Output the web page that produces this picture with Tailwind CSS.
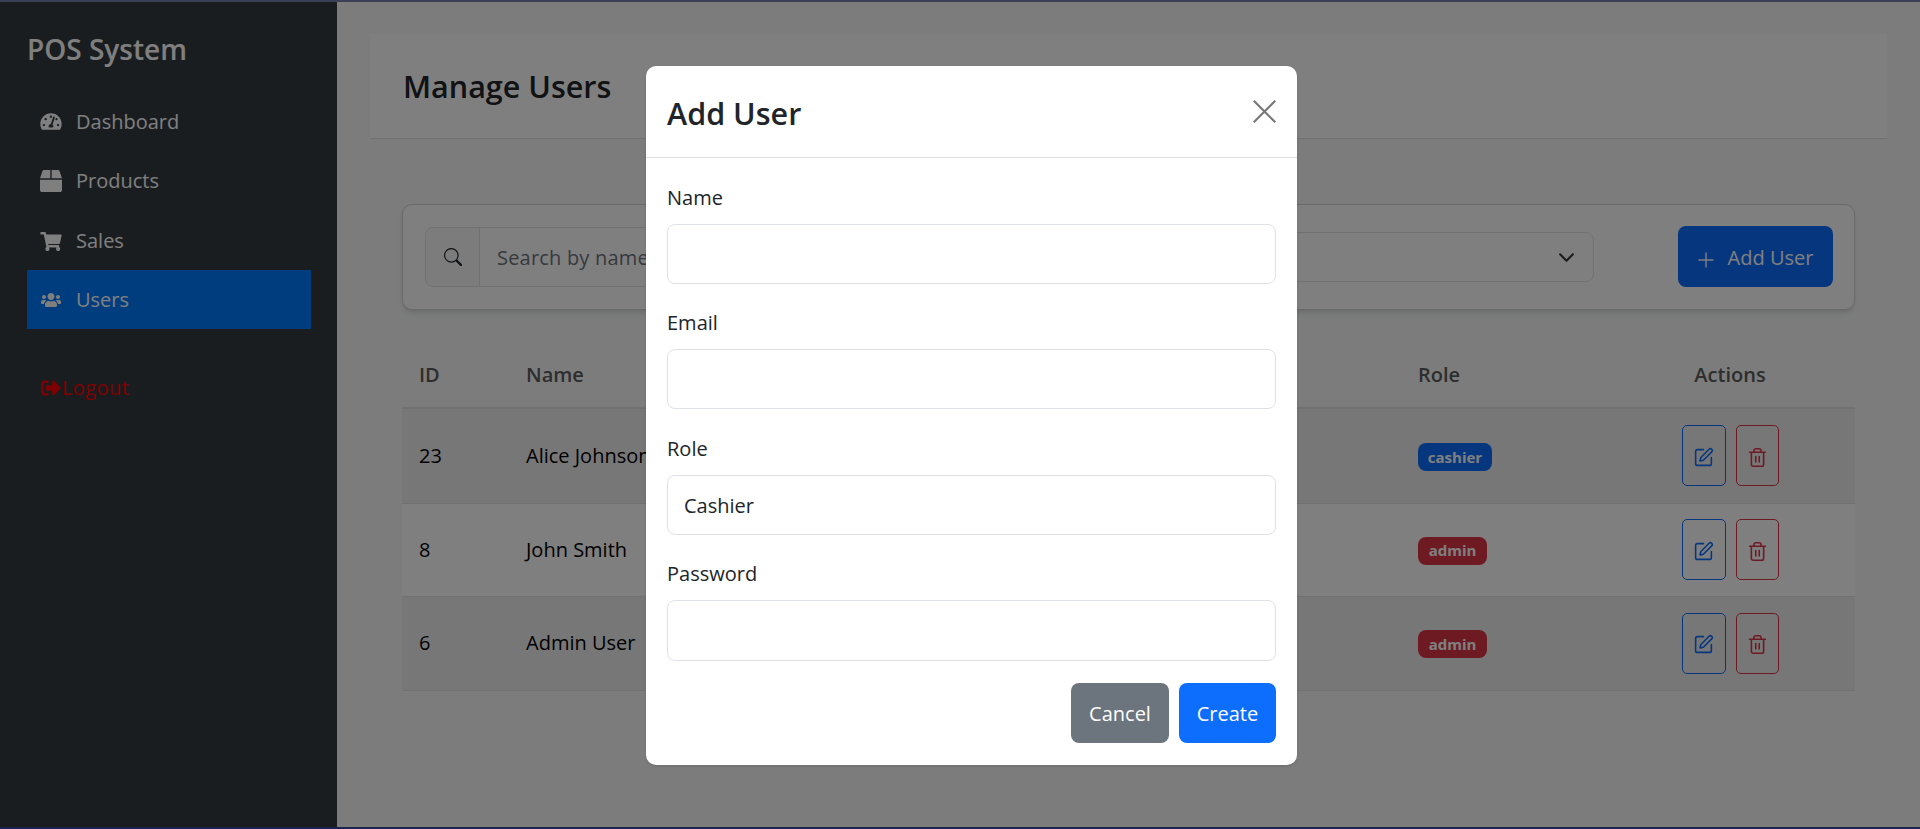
<!DOCTYPE html>
<html lang="en">
<head>
  <meta charset="UTF-8" />
  <meta name="viewport" content="width=device-width, initial-scale=1.0" />
  <title>POS System - Users</title>
  <script src="https://cdn.jsdelivr.net/npm/@tailwindcss/browser@4"></script>
</head>
<body class="h-[829px] overflow-hidden bg-white font-['Open_Sans',sans-serif] text-[20px] text-[#212529]">
  <div class="h-[2px] bg-[#3c4056]"></div>

  <div class="relative flex h-[825px]">
    <!-- Sidebar -->
    <aside class="w-[337px] shrink-0 bg-[#343a40] pt-[29px] pr-[26px] pl-[27px] text-white">
      <h1 class="mb-[25px] h-[36px] text-[28px] leading-[36px] font-semibold">POS System</h1>
      <nav class="flex flex-col">
        <a class="flex h-[59px] items-center pl-[13px]">
          <svg class="mr-[14px] h-[19px] w-[22px] fill-current" viewBox="0 0 576 512"><path d="M288 32C128.94 32 0 160.94 0 320c0 52.8 14.25 102.26 39.06 144.8 5.61 9.62 16.3 15.2 27.44 15.2h443c11.14 0 21.83-5.58 27.44-15.2C561.75 422.26 576 372.8 576 320c0-159.06-128.94-288-288-288zm0 64c14.71 0 26.58 10.13 30.32 23.65-1.11 2.26-2.64 4.23-3.45 6.67l-9.22 27.67c-5.13 3.49-10.97 6.01-17.64 6.01-17.67 0-32-14.33-32-32S270.33 96 288 96zM96 384c-17.67 0-32-14.33-32-32s14.33-32 32-32 32 14.33 32 32-14.33 32-32 32zm48-160c-17.67 0-32-14.33-32-32s14.33-32 32-32 32 14.33 32 32-14.33 32-32 32zm246.77-72.41l-61.33 184C343.13 347.33 352 364.54 352 384c0 11.72-3.38 22.55-8.88 32H232.88c-5.5-9.45-8.88-20.28-8.88-32 0-33.94 26.5-61.43 59.9-63.59l61.34-184.01c4.17-12.56 17.73-19.45 30.36-15.17 12.57 4.19 19.35 17.79 15.17 30.36zm14.66 57.2l15.52-46.55c3.47-1.29 7.13-2.23 11.05-2.23 17.67 0 32 14.33 32 32s-14.33 32-32 32c-11.38-.01-20.89-6.28-26.57-15.22zM480 384c-17.67 0-32-14.33-32-32s14.33-32 32-32 32 14.33 32 32-14.33 32-32 32z"/></svg>
          Dashboard
        </a>
        <a class="flex h-[59px] items-center pl-[13px]">
          <svg class="mr-[14px] h-[22px] w-[22px] fill-current" viewBox="0 0 512 512"><path d="M509.5 184.6L458.9 32.8C452.4 13.2 434.1 0 413.4 0H272v192h238.7c-.4-2.5-.4-5-1.2-7.4zM240 0H98.6c-20.7 0-39 13.2-45.5 32.8L2.5 184.6c-.8 2.4-.8 4.9-1.2 7.4H240V0zM0 224v240c0 26.5 21.500 48 48 48h416c26.5 0 48-21.5 48-48V224H0z"/></svg>
          Products
        </a>
        <a class="flex h-[60px] items-center pt-[2px] pl-[13px]">
          <svg class="mr-[14px] h-[19px] w-[22px] fill-current" viewBox="0 0 576 512"><path d="M528.12 301.319l47.273-208C578.806 78.301 567.391 64 551.99 64H159.208l-9.166-44.81C147.758 8.021 137.93 0 126.529 0H24C10.745 0 0 10.745 0 24v16c0 13.255 10.745 24 24 24h69.883l70.248 343.435C147.325 417.1 136 435.222 136 456c0 30.928 25.072 56 56 56s56-25.072 56-56c0-15.674-6.447-29.835-16.824-40h209.647C430.447 426.165 424 440.326 424 456c0 30.928 25.072 56 56 56s56-25.072 56-56c0-22.172-12.888-41.332-31.579-50.405l5.517-24.276c3.413-15.018-8.002-29.319-23.403-29.319H218.117l-6.545-32h293.145c11.206 0 20.92-7.754 23.403-18.681z"/></svg>
          Sales
        </a>
        <a class="flex h-[59px] items-center bg-[#007bff] pl-[13px]">
          <svg class="mr-[14px] h-[16px] w-[22px] fill-current" viewBox="0 0 640 512"><path d="M96 224c35.3 0 64-28.7 64-64s-28.7-64-64-64-64 28.7-64 64 28.7 64 64 64zm448 0c35.3 0 64-28.7 64-64s-28.7-64-64-64-64 28.7-64 64 28.7 64 64 64zm32 32h-64c-17.6 0-33.5 7.1-45.1 18.6 40.3 22.1 68.9 62 75.1 109.4h66c17.7 0 32-14.3 32-32v-32c0-35.3-28.7-64-64-64zm-256 0c61.9 0 112-50.1 112-112S381.9 32 320 32 208 82.1 208 144s50.1 112 112 112zm76.8 32h-8.3c-20.8 10-43.9 16-68.5 16s-47.6-6-68.5-16h-8.3C179.6 288 128 339.6 128 403.2V432c0 26.5 21.5 48 48 48h288c26.5 0 48-21.5 48-48v-28.8c0-63.6-51.6-115.2-115.2-115.2zm-223.7-13.4C161.5 263.1 145.6 256 128 256H64c-35.3 0-64 28.7-64 64v32c0 17.7 14.3 32 32 32h65.9c6.3-47.4 34.9-87.3 75.2-109.4z"/></svg>
          Users
        </a>
        <a class="mt-[29px] flex h-[59px] items-center pl-[13px] tracking-[0.4px] text-[#ff0000]">
          <svg class="h-[20px] w-[22px] fill-current" viewBox="0 0 512 512"><path d="M497 273L329 441c-15 15-41 4.5-41-17v-96H152c-13.3 0-24-10.7-24-24v-96c0-13.3 10.7-24 24-24h136V88c0-21.4 25.9-32 41-17l168 168c9.3 9.4 9.3 24.6 0 34zM192 436v-40c0-6.6-5.4-12-12-12H96c-17.7 0-32-14.3-32-32V160c0-17.7 14.3-32 32-32h84c6.6 0 12-5.4 12-12V76c0-6.6-5.4-12-12-12H96c-53 0-96 43-96 96v192c0 53 43 96 96 96h84c6.6 0 12-5.4 12-12z"/></svg>
          Logout
        </a>
      </nav>
    </aside>

    <!-- Main -->
    <main class="flex-1 bg-[#f8f9fa] px-[33px] pt-[32px]">
      <header class="flex h-[105px] items-center border-b border-[#dee2e6] bg-white px-[33px]">
        <h2 class="pt-[2px] text-[30.5px] font-semibold">Manage Users</h2>
      </header>

      <div class="mx-[32px] mt-[65px]">
        <!-- Filters -->
        <div class="flex h-[106px] items-center rounded-[10px] border border-[#d5d5d5] bg-white pr-[21px] pl-[22px] shadow-md">
          <div class="flex h-[60px] w-[575px] rounded-[8px] border border-[#dee2e6]">
            <span class="flex w-[54px] items-center justify-center rounded-l-[8px] border-r border-[#dee2e6] bg-[#f8f9fa]">
              <svg class="h-[18px] w-[18px] fill-current text-[#212529]" viewBox="0 0 16 16"><path d="M11.742 10.344a6.5 6.5 0 1 0-1.397 1.398h-.001c.03.04.062.078.098.115l3.85 3.85a1 1 0 0 0 1.415-1.414l-3.85-3.85a1.007 1.007 0 0 0-.115-.1zM12 6.5a5.5 5.5 0 1 1-11 0 5.5 5.5 0 0 1 11 0z"/></svg>
            </span>
            <span class="flex flex-1 items-center pt-[2px] pl-[17px] tracking-[0.2px] text-[#6c757d]">Search by name or email</span>
          </div>
          <div class="ml-[16px] flex h-[50px] w-[578px] items-center justify-end rounded-[8px] border border-[#dee2e6] pr-[18px]">
            <svg class="h-[17px] w-[17px] fill-none stroke-[#343a40] stroke-2" viewBox="0 0 16 16"><path stroke-linecap="round" stroke-linejoin="round" d="m2 5 6 6 6-6"/></svg>
          </div>
          <button class="-mt-[1px] ml-auto flex h-[61px] w-[155px] items-center justify-center gap-[14px] rounded-[8px] bg-[#0d6efd] pt-[3px] text-white">
            <svg class="mt-[3px] h-[16px] w-[16px] stroke-white stroke-[1.4]" viewBox="0 0 16 16"><path stroke-linecap="round" d="M8 1v14M1 8h14"/></svg>
            Add User
          </button>
        </div>

        <!-- Users table -->
        <table class="mt-[32px] w-full table-fixed border-collapse">
          <colgroup>
            <col class="w-[107px]" />
            <col class="w-[400px]" />
            <col class="w-[492px]" />
            <col class="w-[204px]" />
            <col class="w-[250px]" />
          </colgroup>
          <thead>
            <tr class="h-[66px] border-b-2 border-[#dee2e6] text-left text-[#5c5c5c]">
              <th class="pl-[17px] font-semibold">ID</th>
              <th class="pl-[17px] font-semibold">Name</th>
              <th class="pl-[17px] font-semibold">Email</th>
              <th class="pl-[17px] font-semibold">Role</th>
              <th class="text-center font-semibold">Actions</th>
            </tr>
          </thead>
          <tbody class="text-black">
            <tr class="h-[95px] border-b border-[#dee2e6] bg-[#efefef]">
              <td class="pl-[17px]">23</td>
              <td class="pl-[17px]">Alice Johnson</td>
              <td class="pl-[17px]">alice@example.com</td>
              <td class="pl-[17px]"><span class="inline-flex h-[28px] w-[74px] items-center justify-center rounded-[8px] bg-[#0d6efd] text-[15px] font-bold text-white">cashier</span></td>
              <td>
                <div class="flex justify-center gap-[10px]">
                  <button class="flex h-[61px] w-[44px] items-center justify-center rounded-[5px] border border-[#0d6efd] pt-[3px] text-[#0d6efd]">
                    <svg class="h-[21px] w-[21px] fill-none stroke-current stroke-[1.8]" viewBox="0 0 24 24" stroke-linecap="round" stroke-linejoin="round"><path d="M12 3H5a2 2 0 0 0-2 2v14a2 2 0 0 0 2 2h14a2 2 0 0 0 2-2v-7"/><path d="M18.375 2.625a1 1 0 0 1 3 3l-9.013 9.014a2 2 0 0 1-.853.505l-2.873.84a.5.5 0 0 1-.62-.62l.84-2.873a2 2 0 0 1 .506-.852z"/></svg>
                  </button>
                  <button class="flex h-[61px] w-[43px] items-center justify-center rounded-[5px] border border-[#dc3545] pt-[3px] text-[#dc3545]">
                    <svg class="h-[21px] w-[21px] fill-none stroke-current stroke-[1.8]" viewBox="0 0 24 24" stroke-linecap="round" stroke-linejoin="round"><path d="M3 6h18M19 6v14a2 2 0 0 1-2 2H7a2 2 0 0 1-2-2V6M8 6V4a2 2 0 0 1 2-2h4a2 2 0 0 1 2 2v2M10 11v6M14 11v6"/></svg>
                  </button>
                </div>
              </td>
            </tr>
            <tr class="h-[93px] border-b border-[#dee2e6] bg-white">
              <td class="pl-[17px]">8</td>
              <td class="pl-[17px]">John Smith</td>
              <td class="pl-[17px]">john@example.com</td>
              <td class="pl-[17px]"><span class="inline-flex h-[28px] w-[69px] items-center justify-center rounded-[8px] bg-[#dc3545] text-[15px] font-bold text-white">admin</span></td>
              <td>
                <div class="flex justify-center gap-[10px]">
                  <button class="flex h-[61px] w-[44px] items-center justify-center rounded-[5px] border border-[#0d6efd] pt-[3px] text-[#0d6efd]">
                    <svg class="h-[21px] w-[21px] fill-none stroke-current stroke-[1.8]" viewBox="0 0 24 24" stroke-linecap="round" stroke-linejoin="round"><path d="M12 3H5a2 2 0 0 0-2 2v14a2 2 0 0 0 2 2h14a2 2 0 0 0 2-2v-7"/><path d="M18.375 2.625a1 1 0 0 1 3 3l-9.013 9.014a2 2 0 0 1-.853.505l-2.873.84a.5.5 0 0 1-.62-.62l.84-2.873a2 2 0 0 1 .506-.852z"/></svg>
                  </button>
                  <button class="flex h-[61px] w-[43px] items-center justify-center rounded-[5px] border border-[#dc3545] pt-[3px] text-[#dc3545]">
                    <svg class="h-[21px] w-[21px] fill-none stroke-current stroke-[1.8]" viewBox="0 0 24 24" stroke-linecap="round" stroke-linejoin="round"><path d="M3 6h18M19 6v14a2 2 0 0 1-2 2H7a2 2 0 0 1-2-2V6M8 6V4a2 2 0 0 1 2-2h4a2 2 0 0 1 2 2v2M10 11v6M14 11v6"/></svg>
                  </button>
                </div>
              </td>
            </tr>
            <tr class="h-[94px] border-b border-[#dee2e6] bg-[#efefef]">
              <td class="pl-[17px]">6</td>
              <td class="pl-[17px]">Admin User</td>
              <td class="pl-[17px]">admin@example.com</td>
              <td class="pl-[17px]"><span class="inline-flex h-[28px] w-[69px] items-center justify-center rounded-[8px] bg-[#dc3545] text-[15px] font-bold text-white">admin</span></td>
              <td>
                <div class="flex justify-center gap-[10px]">
                  <button class="flex h-[61px] w-[44px] items-center justify-center rounded-[5px] border border-[#0d6efd] pt-[3px] text-[#0d6efd]">
                    <svg class="h-[21px] w-[21px] fill-none stroke-current stroke-[1.8]" viewBox="0 0 24 24" stroke-linecap="round" stroke-linejoin="round"><path d="M12 3H5a2 2 0 0 0-2 2v14a2 2 0 0 0 2 2h14a2 2 0 0 0 2-2v-7"/><path d="M18.375 2.625a1 1 0 0 1 3 3l-9.013 9.014a2 2 0 0 1-.853.505l-2.873.84a.5.5 0 0 1-.62-.62l.84-2.873a2 2 0 0 1 .506-.852z"/></svg>
                  </button>
                  <button class="flex h-[61px] w-[43px] items-center justify-center rounded-[5px] border border-[#dc3545] pt-[3px] text-[#dc3545]">
                    <svg class="h-[21px] w-[21px] fill-none stroke-current stroke-[1.8]" viewBox="0 0 24 24" stroke-linecap="round" stroke-linejoin="round"><path d="M3 6h18M19 6v14a2 2 0 0 1-2 2H7a2 2 0 0 1-2-2V6M8 6V4a2 2 0 0 1 2-2h4a2 2 0 0 1 2 2v2M10 11v6M14 11v6"/></svg>
                  </button>
                </div>
              </td>
            </tr>
          </tbody>
        </table>
      </div>
    </main>

    <!-- Backdrop -->
    <div class="absolute inset-0 bg-black/50"></div>

    <!-- Add User modal -->
    <div class="absolute top-[64px] left-[646px] w-[651px] rounded-[10px] bg-white shadow-sm">
      <div class="flex h-[92px] items-center justify-between border-b border-[#dee2e6] px-[21px]">
        <h3 class="pt-[4px] text-[30.5px] font-semibold">Add User</h3>
        <svg class="h-[23px] w-[23px] stroke-[#777777] stroke-[1.5]" viewBox="0 0 16 16"><path d="M.5.5l15 15M15.500.5l-15 15"/></svg>
      </div>
      <form class="px-[21px] pt-[23px] pb-[22px]">
        <label class="block h-[43px] pt-[2px]">Name</label>
        <div class="h-[60px] rounded-[8px] border border-[#dee2e6]"></div>
        <label class="mt-[21px] block h-[44px] pt-[3px]">Email</label>
        <div class="h-[60px] rounded-[8px] border border-[#dee2e6]"></div>
        <label class="mt-[22px] block h-[44px] pt-[3px]">Role</label>
        <div class="flex h-[60px] items-center rounded-[8px] border border-[#dee2e6] pt-[1px] pl-[16px]">Cashier</div>
        <label class="mt-[21px] block h-[44px] pt-[3px]">Password</label>
        <div class="h-[61px] rounded-[8px] border border-[#dee2e6]"></div>
        <div class="mt-[22px] flex justify-end gap-[10px]">
          <button type="button" class="h-[60px] w-[98px] rounded-[8px] bg-[#6c757d] pt-[2px] text-white">Cancel</button>
          <button type="button" class="h-[60px] w-[97px] rounded-[8px] bg-[#0d6efd] pt-[2px] text-white">Create</button>
        </div>
      </form>
    </div>
  </div>

  <div class="h-[2px] bg-[#18244f]"></div>
</body>
</html>
